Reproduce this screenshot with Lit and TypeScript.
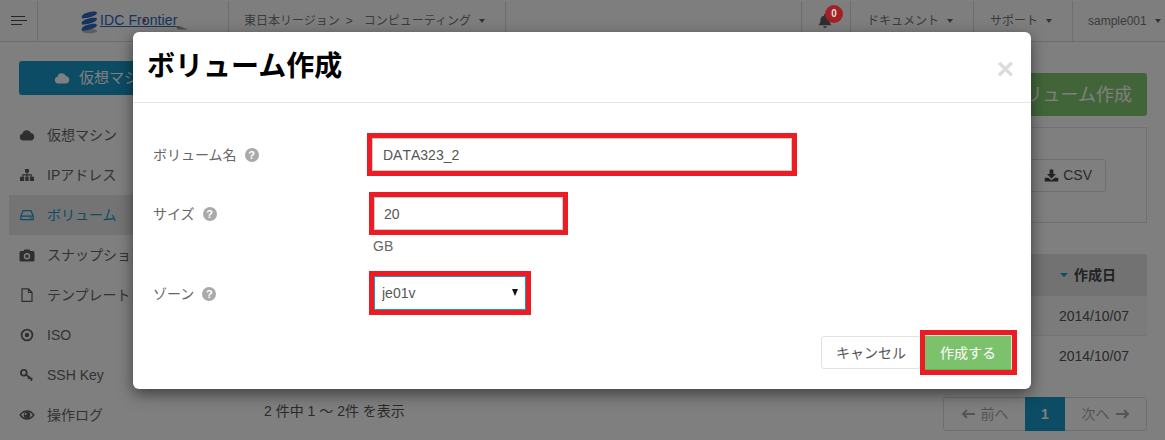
import { LitElement, html, css, svg } from "lit";
import { customElement } from "lit/decorators.js";

const ICONS: Record<string, unknown> = {
  cloud: svg`<path d="M4.200 13.500A3.400 3.400 0 0 1 3.400 6.800 4.600 4.600 0 0 1 12 5.900a3.900 3.900 0 0 1 .4 7.600z"/>`,
  sitemap: svg`<path d="M6 2h4v3.600H8.600v1.700h4.200v2.400H15V14h-4.200V9.700h.9V8.400H8.600v1.300h1V14H6.300V9.700h1.100V8.400H4.300v1.300h.9V14H1V9.700h2.200V7.300h4.200V5.600H6z"/>`,
  hdd: svg`<path fill="none" stroke="currentColor" stroke-width="1.200" d="M1.800 9.200 4 3.700h8l2.200 5.500v3.400H1.800zM1.800 9.200h12.400"/><rect x="10.600" y="10.400" width="2" height="1" />`,
  camera: svg`<path fill-rule="evenodd" d="M5.500 2.500h5L11.500 4H14a1.500 1.500 0 0 1 1.500 1.500V13a1.500 1.500 0 0 1-1.500 1.500H2A1.500 1.500 0 0 1 .5 13V5.500A1.500 1.500 0 0 1 2 4h2.500zM8 6a3.200 3.200 0 1 0 0 6.400A3.200 3.200 0 0 0 8 6zm0 1.400a1.800 1.800 0 1 1 0 3.600 1.800 1.800 0 0 1 0-3.600z"/>`,
  file: svg`<path fill="none" stroke="currentColor" stroke-width="1.200" d="M3 1.800h6.500L13 5.300V14.400H3zM9.500 1.800v3.500H13"/>`,
  dot: svg`<circle cx="8" cy="8" r="5.400" fill="none" stroke="currentColor" stroke-width="1.800"/><circle cx="8" cy="8" r="2.200"/>`,
  key: svg`<circle cx="4.800" cy="5.800" r="2.900" fill="none" stroke="currentColor" stroke-width="1.800"/><path fill="none" stroke="currentColor" stroke-width="1.800" d="M7 7.800l6.300 4.700M10.200 10.200l-1 1.800M12.800 12.200l-.9 1.600"/>`,
  eye: svg`<path fill="none" stroke="currentColor" stroke-width="1.500" d="M1.200 8C3 5.400 5.300 4.100 8 4.100S13 5.400 14.800 8C13 10.600 10.700 11.900 8 11.900S3 10.600 1.200 8z"/><path fill-rule="evenodd" d="M8 4.700a3.300 3.300 0 1 1 0 6.600 3.300 3.300 0 0 1 0-6.600zM6.700 5.900a1 1 0 1 0 0 2 1 1 0 0 0 0-2z"/>`,
  bell: svg`<path d="M8 1a1 1 0 0 1 1 1v.7c2.300.4 3.600 2.300 3.600 4.500 0 2.700.8 3.800 2 5H1.400c1.200-1.200 2-2.300 2-5 0-2.200 1.300-4.100 3.600-4.500V2a1 1 0 0 1 1-1zM6.300 13.200h3.400A1.700 1.700 0 0 1 8 15a1.700 1.700 0 0 1-1.700-1.800z"/>`,
  download: svg`<path d="M6 1.500h4v5h2.800L8 11.200 3.200 6.500H6z"/><path d="M.8 10.500h3.800L8 13l3.400-2.500h3.800v4H.8z"/>`,
};

const icon = (name: string, cls = "") =>
  html`<svg class="ico ${cls}" viewBox="0 0 16 16" fill="currentColor" aria-hidden="true">${ICONS[name]}</svg>`;

const NAV = [
  ["cloud", "仮想マシン"],
  ["sitemap", "IPアドレス"],
  ["hdd", "ボリューム"],
  ["camera", "スナップショット"],
  ["file", "テンプレート"],
  ["dot", "ISO"],
  ["key", "SSH Key"],
  ["eye", "操作ログ"],
];

@customElement("app-root")
export class AppRoot extends LitElement {
  static styles = css`
    :host {
      display: block;
      width: 1165px;
      height: 440px;
      font-family: "Liberation Sans", "Noto Sans CJK JP", sans-serif;
      font-size: 14px;
      color: #666;
    }
    * { box-sizing: border-box; }
    .page {
      position: relative;
      width: 1165px;
      height: 440px;
      overflow: hidden;
      background: #fff;
    }
    .ico { width: 16px; height: 16px; display: block; flex: none; }

    /* top bar */
    .top {
      display: flex;
      height: 42px;
      background: #fdfdfd;
      border-top: 1px solid #fff;
      border-bottom: 1px solid #ddd;
      font-size: 12px;
      line-height: 18px;
      color: #777;
    }
    .cell {
      display: flex;
      align-items: center;
      border-right: 1px solid #ddd;
      white-space: nowrap;
    }
    .burger { width: 38px; padding-left: 11px; }
    .burger svg { display: block; }
    .logo { width: 191px; padding-left: 43px; gap: 2px; position: relative; }
    .cyl { display: block; width: 17px; height: 23px; margin-top: 2px; }
    .brand {
      position: relative;
      font-size: 14px;
      line-height: 18px;
      letter-spacing: 0.1px;
      color: #2a68bc;
      margin-top: -3px;
    }
    .brand i {
      position: absolute;
      left: 43px;
      top: 8px;
      width: 3px;
      height: 3px;
      border-radius: 50%;
      background: #d22;
    }
    .swoosh { position: absolute; left: 62px; top: 24px; display: block; }
    .region { width: 277px; padding-left: 15px; }
    .sep { margin: 0 11px 0 6px; }
    .caret {
      width: 0;
      height: 0;
      margin-left: 8px;
      border-left: 3.5px solid transparent;
      border-right: 3.5px solid transparent;
      border-top: 4px solid #666;
    }
    .spring { flex: 1; border-right: 1px solid #ddd; }
    .bell { position: relative; width: 49px; padding-left: 15px; color: #5f5f5f; }
    .badge {
      position: absolute;
      left: 23px;
      top: 4px;
      z-index: 2;
      width: 18px;
      height: 18px;
      border-radius: 50%;
      background: #a32024;
      color: #ddd;
      font-size: 10px;
      font-weight: 700;
      line-height: 18px;
      text-align: center;
    }
    .docs { width: 123px; padding-left: 16px; }
    .support { width: 99px; padding-left: 16px; }
    .user { flex: 0 0 92px; padding-left: 15px; border-right: 0; }

    /* page body */
    .main { display: flex; }
    .side { width: 250px; padding: 19px 0 0 9px; }
    .new {
      display: flex;
      align-items: center;
      justify-content: center;
      gap: 9px;
      width: 200px;
      height: 34px;
      margin-left: 10px;
      background: #1898c8;
      border-radius: 3px;
      color: #fff;
      font-size: 15px;
      line-height: 20px;
    }
    .nav { display: block; margin: 20px 0 0; padding: 0; list-style: none; }
    .nav li {
      display: flex;
      align-items: center;
      gap: 12px;
      height: 40px;
      padding-left: 10px;
      line-height: 20px;
      white-space: nowrap;
    }
    .nav .ico { color: #5e5e5e; }
    .nav .on { background: #e8e8e8; color: #1898c8; }
    .nav .on .ico { color: #1898c8; }

    .content { flex: 1; padding: 31px 18px 0 14px; }
    .actions { display: flex; justify-content: flex-end; }
    .add {
      display: flex;
      align-items: center;
      height: 43px;
      padding: 0 15px;
      background: #82cb73;
      border-radius: 3px;
      color: #fff;
      font-size: 18px;
      line-height: 28px;
    }
    .panel {
      display: flex;
      align-items: center;
      justify-content: flex-end;
      height: 96px;
      margin-top: 11px;
      padding-right: 40px;
      border: 1px solid #e2e2e2;
    }
    .csv {
      display: flex;
      align-items: center;
      gap: 4px;
      height: 33px;
      padding: 0 13px;
      border: 1px solid #ddd;
      border-radius: 3px;
      color: #555;
      font-size: 14px;
    }
    .csv .ico { width: 15px; height: 15px; color: #444; }
    .table { margin-top: 31px; }
    .row {
      display: flex;
      align-items: center;
      justify-content: flex-end;
      height: 40px;
      padding-right: 18px;
      border-bottom: 1px solid #e8e8e8;
      color: #555;
      line-height: 20px;
    }
    .row.head {
      height: 42px;
      padding-right: 31px;
      background: #e4e4e4;
      border-bottom: 0;
      color: #444;
      font-weight: 700;
      gap: 6px;
    }
    .row.odd { background: #f7f7f7; }
    .row.last { border-bottom: 0; }
    .sort {
      width: 0;
      height: 0;
      border-left: 4px solid transparent;
      border-right: 4px solid transparent;
      border-top: 4px solid #1898c8;
    }
    .foot {
      display: flex;
      align-items: center;
      justify-content: space-between;
      margin-top: 21px;
      color: #555;
      line-height: 20px;
    }
    .foot .count { margin-top: -6px; }
    .pager {
      display: flex;
      height: 34px;
      border: 1px solid #ddd;
      border-radius: 3px;
      color: #aaa;
    }
    .pager span {
      display: flex;
      align-items: center;
      justify-content: center;
      gap: 6px;
    }
    .pager .p { width: 81px; }
    .pager .n { width: 81px; }
    .pager .cur { width: 40px; margin: -1px 0; background: #1898c8; color: #fff; font-weight: 700; }

    /* modal */
    .backdrop {
      position: absolute;
      inset: 0;
      z-index: 1;
      background: rgba(0, 0, 0, 0.5);
    }
    .modal {
      position: absolute;
      z-index: 3;
      left: 133px;
      top: 32px;
      width: 898px;
      background: #fff;
      border-radius: 6px;
      box-shadow: 0 5px 15px rgba(0, 0, 0, 0.5);
    }
    .m-head {
      display: flex;
      align-items: center;
      justify-content: space-between;
      height: 71px;
      padding: 0 17px 0 14px;
      border-bottom: 1px solid #e5e5e5;
    }
    .m-head h2 {
      margin: 0;
      font-size: 28px;
      line-height: 40px;
      font-weight: 700;
      color: #000;
    }
    .x {
      font-size: 30px;
      line-height: 30px;
      font-weight: 700;
      color: #dcdcdc;
      margin-top: 4px;
    }
    .m-body { padding: 30px 14px 14px 20px; }
    .line { display: flex; align-items: center; }
    .line + .line { margin-top: 16px; }
    .line.gb { margin-top: 3px; margin-bottom: 17px; padding-left: 220px; line-height: 16px; color: #666; }
    .lab {
      display: flex;
      align-items: center;
      gap: 8px;
      width: 216px;
      padding-top: 1px;
      line-height: 20px;
      color: #666;
    }
    .help {
      width: 14px;
      height: 14px;
      border-radius: 50%;
      background: #aaa;
      color: #fff;
      font-size: 11px;
      font-weight: 700;
      line-height: 14px;
      text-align: center;
    }
    .hl { display: block; border: 5px solid #ed1c24; }
    .hl.name { width: 430px; height: 43px; margin-left: -2px; }
    .hl.size { width: 199px; height: 43px; }
    .hl.zone { position: relative; width: 162px; height: 44px; }
    .hl input, .hl select {
      display: block;
      width: 100%;
      height: 100%;
      margin: 0;
      padding: 0 9px;
      background: #fff;
      border: 1px solid #ccc;
      border-radius: 0;
      outline: 0;
      font: inherit;
      font-kerning: none;
      color: #555;
    }
    .hl.name input { padding-left: 10px; }
    .hl select {
      appearance: none;
      -webkit-appearance: none;
      padding-left: 7px;
      border-color: #1c97c8;
    }
    .hl.zone::after {
      content: "";
      position: absolute;
      right: 8px;
      top: 13px;
      border-left: 3.5px solid transparent;
      border-right: 3.5px solid transparent;
      border-top: 7px solid #111;
    }
    .m-foot { display: flex; justify-content: flex-end; align-items: center; margin-top: 15px; }
    .cancel {
      display: flex;
      align-items: center;
      justify-content: center;
      width: 100px;
      height: 33px;
      margin-right: -1px;
      border: 1px solid #e2e2e2;
      border-radius: 3px;
      color: #555;
      line-height: 20px;
      background: #fff;
    }
    .hl.go { width: 97px; height: 45px; }
    .go span {
      display: flex;
      align-items: center;
      justify-content: center;
      height: 100%;
      background: #7cc26d;
      border-top: 1px solid #d3e9ce;
      border-right: 1px solid #d3e9ce;
      border-bottom: 1px solid #6cae5e;
      color: #fff;
      line-height: 20px;
    }
  `;

  render() {
    return html`
      <div class="page">
        <header class="top">
          <div class="cell burger">
            <svg width="16" height="10" viewBox="0 0 16 10" fill="none" stroke="#4a4a4a" stroke-width="1">
              <path d="M0 .5h14M0 4.500h16M0 8.500h11" />
            </svg>
          </div>
          <div class="cell logo">
            <svg class="cyl" viewBox="0 0 18 24">
              <ellipse cx="9" cy="21" rx="8" ry="2.500" fill="#bbb" />
              <g fill="#2a68bc">
                <path d="M1 5c2-3 10-5 15-4.500 1 .3 1 2 .2 2.800C13 6 6 7.500 1.800 7.800.6 7.500.5 6 1 5z" />
                <path d="M1 11.500c2-3 10-5 15-4.500 1 .3 1 2 .2 2.800-3.200 2.700-10.200 4.200-14.400 4.500-1.200-.3-1.300-1.800-.8-2.800z" />
                <path d="M1 18c2-3 10-5 15-4.500 1 .3 1 2 .2 2.800-3.200 2.700-10.200 4.200-14.400 4.500C.6 20.500.5 19 1 18z" />
              </g>
            </svg>
            <span class="brand">IDC Frontier<i></i></span>
            <svg class="swoosh" width="88" height="5" viewBox="0 0 88 5">
              <path d="M0 1h77v1H0z" fill="#3d6aa6" />
              <path d="M75 1h4L88 4.500H78z" fill="#999" />
            </svg>
          </div>
          <div class="cell region">
            東日本リージョン<span class="sep">&gt;</span>コンピューティング<i class="caret"></i>
          </div>
          <div class="spring"></div>
          <div class="cell bell">${icon("bell")}<span class="badge">0</span></div>
          <div class="cell docs">ドキュメント<i class="caret"></i></div>
          <div class="cell support">サポート<i class="caret"></i></div>
          <div class="cell user">sample001<i class="caret"></i></div>
        </header>

        <div class="main">
          <aside class="side">
            <div class="new">${icon("cloud")}仮想マシン作成</div>
            <ul class="nav">
              ${NAV.map(
                ([i, t], n) => html`<li class=${n === 2 ? "on" : ""}>${icon(i)}<span>${t}</span></li>`
              )}
            </ul>
          </aside>
          <section class="content">
            <div class="actions"><div class="add">ボリューム作成</div></div>
            <div class="panel"><div class="csv">${icon("download")}CSV</div></div>
            <div class="table">
              <div class="row head"><i class="sort"></i>作成日</div>
              <div class="row odd">2014/10/07</div>
              <div class="row last">2014/10/07</div>
            </div>
            <div class="foot">
              <div class="count">2 件中 1 〜 2件 を表示</div>
              <div class="pager">
                <span class="p">
                  <svg width="14" height="10" viewBox="0 0 14 10" fill="none" stroke="currentColor" stroke-width="2"><path d="M14 5H2M6 1 2 5l4 4" /></svg>
                  前へ
                </span>
                <span class="cur">1</span>
                <span class="n">
                  次へ
                  <svg width="14" height="10" viewBox="0 0 14 10" fill="none" stroke="currentColor" stroke-width="2"><path d="M0 5h12M8 1l4 4-4 4" /></svg>
                </span>
              </div>
            </div>
          </section>
        </div>

        <div class="backdrop"></div>

        <div class="modal">
          <div class="m-head">
            <h2>ボリューム作成</h2>
            <span class="x">×</span>
          </div>
          <div class="m-body">
            <div class="line">
              <div class="lab">ボリューム名<span class="help">?</span></div>
              <label class="hl name"><input type="text" .value=${"DATA323_2"} /></label>
            </div>
            <div class="line">
              <div class="lab">サイズ<span class="help">?</span></div>
              <label class="hl size"><input type="text" .value=${"20"} /></label>
            </div>
            <div class="line gb">GB</div>
            <div class="line">
              <div class="lab">ゾーン<span class="help">?</span></div>
              <label class="hl zone"><select><option>je01v</option></select></label>
            </div>
            <div class="m-foot">
              <div class="cancel">キャンセル</div>
              <div class="hl go"><span>作成する</span></div>
            </div>
          </div>
        </div>
      </div>
    `;
  }
}
